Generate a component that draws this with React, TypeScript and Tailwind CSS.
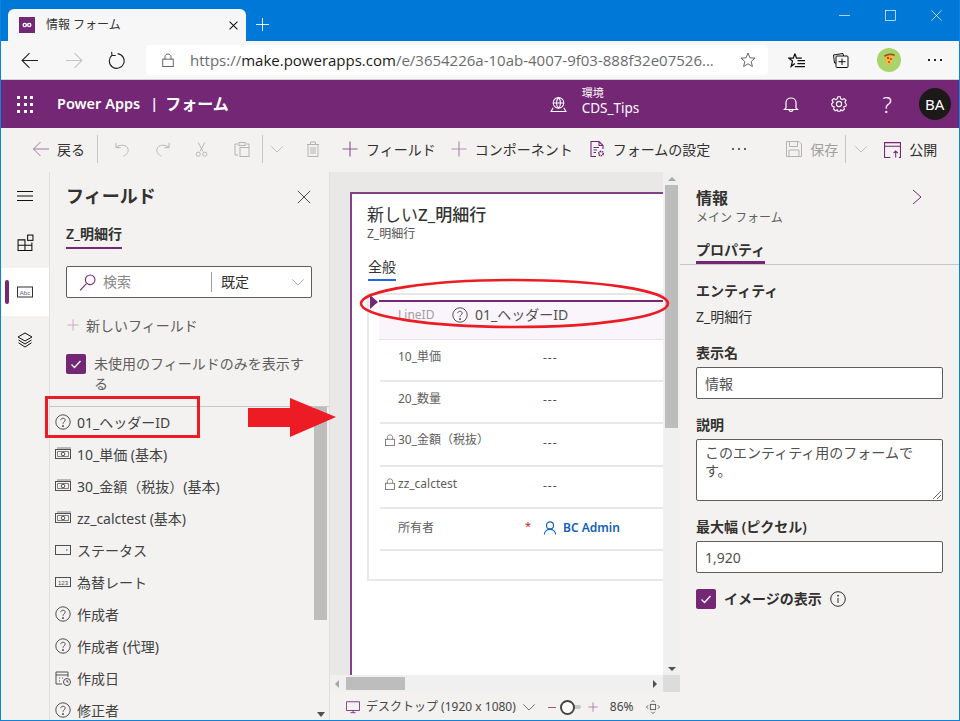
import React from "react";

const P = "#742774";
type IP = { c?: string; s?: number; w?: number; cl?: string; children?: React.ReactNode };
const I = ({ c = "#323130", s = 16, w = 1, cl = "", children }: IP) => (
  <svg width={s} height={s} viewBox="0 0 16 16" fill="none" stroke={c} strokeWidth={w} className={"shrink-0 " + cl}>
    {children}
  </svg>
);
const Plus = ({ c = P, s = 16 }: { c?: string; s?: number }) => (
  <I c={c} s={s} w={1.2}><path d="M8 0.5V15.5M0.5 8H15.5" /></I>
);
const Chevron = ({ c = "#8a8886", s = 16 }: { c?: string; s?: number }) => (
  <I c={c} s={s}><path d="M1.5 5L8 11.5L14.5 5" /></I>
);
const Q = ({ c = "#505050" }: { c?: string }) => (
  <svg width="16" height="16" viewBox="0 0 16 16" fill="none" stroke={c} className="shrink-0">
    <circle cx="8" cy="8" r="7.2" />
    <path d="M5.8 6.2C5.8 3.6 10.2 3.6 10.2 6.2C10.2 7.8 8 7.8 8 9.8" />
    <circle cx="8" cy="12" r="0.6" fill={c} />
  </svg>
);
const Money = () => (
  <I c="#505050"><rect x="0.5" y="3.5" width="15" height="9" /><path d="M2 2H16M2.5 5.5H13.5V10.5H2.5Z" strokeWidth="0.7" /><circle cx="8" cy="8" r="1.8" /></I>
);
const LockI = ({ c = "#605e5c", s = 12 }: { c?: string; s?: number }) => (
  <I c={c} s={s}><rect x="2" y="7" width="12" height="8.5" /><path d="M4.5 7V4.5C4.5 0 11.5 0 11.5 4.5V7" /></I>
);
const Check = () => (
  <div className="w-5 h-5 rounded-[2px] bg-[#742774] flex items-center justify-center shrink-0">
    <svg width="12" height="12" viewBox="0 0 12 12" fill="none" stroke="white" strokeWidth="1.3"><path d="M1.5 6.5L4.5 9.5L10.5 3" /></svg>
  </div>
);

const fields: [React.ReactNode, string][] = [
  [<Q />, "01_ヘッダーID"],
  [<Money />, "10_単価 (基本)"],
  [<Money />, "30_金額（税抜）(基本)"],
  [<Money />, "zz_calctest (基本)"],
  [<I c="#505050"><rect x="0.5" y="3.5" width="15" height="9" /><path d="M11 8H12.5" /></I>, "ステータス"],
  [
    <svg width="16" height="16" viewBox="0 0 16 16" fill="none" stroke="#505050" className="shrink-0">
      <rect x="0.5" y="3.5" width="15" height="9" />
      <text x="8" y="10.5" fontSize="6" fill="#505050" stroke="none" textAnchor="middle" fontFamily="Liberation Sans">123</text>
    </svg>,
    "為替レート",
  ],
  [<Q />, "作成者"],
  [<Q />, "作成者 (代理)"],
  [
    <I c="#505050"><path d="M7 14H1V2H13V7M1 5H13" /><circle cx="12" cy="12" r="3.5" fill="#f3f2f1" /><path d="M12 10V12H13.5" /><path d="M4 8H5M7 8H8M4 11H5" /></I>,
    "作成日",
  ],
  [<Q />, "修正者"],
];

const rows: { t: string; lock: boolean; m: string; v: string; h: string }[] = [
  { t: "10_単価", lock: false, m: "mt-[-6px]", v: "mt-[-4px]", h: "h-[42px]" },
  { t: "20_数量", lock: false, m: "mt-[-6px]", v: "mt-[-4px]", h: "h-[42px]" },
  { t: "30_金額（税抜）", lock: true, m: "mt-[-9px]", v: "mt-[-3px]", h: "h-[43px]" },
  { t: "zz_calctest", lock: true, m: "mt-[-7px]", v: "mt-[-3px]", h: "h-[42px]" },
];

const Label = ({ children, cl = "" }: { children: React.ReactNode; cl?: string }) => (
  <div className={"text-[14px] font-semibold text-[#323130] leading-[18px] " + cl}>{children}</div>
);

const CmdText = ({ children, cl = "", dim = false }: { children: React.ReactNode; cl?: string; dim?: boolean }) => (
  <span className={"text-[14px] whitespace-nowrap " + (dim ? "text-[#a19f9d] " : "text-[#323130] ") + cl}>{children}</span>
);
const Div = ({ cl = "" }: { cl?: string }) => <div className={"w-px h-7 bg-[#c8c6c4] shrink-0 " + cl} />;

export default function App() {
  const dis = "#b5b3b1";
  return (
    <div className="relative w-[960px] h-[721px] overflow-hidden flex flex-col bg-[#f3f2f1] border-x border-b border-[#0a84e0] text-[#323130] font-['Noto_Sans','Noto_Sans_CJK_JP',sans-serif]">
      {/* title bar */}
      <div className="h-[41px] -mx-px bg-[#0078d7] flex items-end shrink-0">
        <div className="ml-[8px] w-[238px] h-[32px] bg-[#f7f7f7] rounded-t-[6px] flex items-center pl-[11px] pr-[8px]">
          <div className="w-4 h-4 bg-[#742774] flex items-center justify-center shrink-0">
            <svg width="10" height="6" viewBox="0 0 10 6" fill="none" stroke="white" strokeWidth="1.4"><circle cx="2.8" cy="3" r="1.6" /><circle cx="7.2" cy="3" r="1.6" /></svg>
          </div>
          <span className="ml-[11px] text-[12px] text-[#333] flex-1">情報 フォーム</span>
          <I c="#111" s={9} w={1.8}><path d="M1 1L15 15M15 1L1 15" /></I>
        </div>
        <div className="ml-[10px] mb-[10px]"><I c="white" s={13} w={1.1}><path d="M8 0V16M0 8H16" /></I></div>
        <div className="flex-1 self-stretch flex items-start justify-end">
          <div className="flex items-center h-[30px] pr-[18px] gap-[35px]">
            <I c="white" s={11}><path d="M0 8H16" /></I>
            <I c="white" s={11}><rect x="0.7" y="0.7" width="14.6" height="14.6" /></I>
            <I c="white" s={11}><path d="M0.5 0.5L15.5 15.5M15.5 0.5L0.5 15.5" /></I>
          </div>
        </div>
      </div>
      {/* address bar */}
      <div className="h-[39px] shrink-0 bg-[#f7f7f7] border-b border-[#d2d2d2] flex items-center">
        <div className="ml-[20px]"><I c="#222" s={17}><path d="M1 8H16M8 1L1 8L8 15" /></I></div>
        <div className="ml-[28px]"><I c="#c4c4c4" s={17}><path d="M0 8H15M8 1L15 8L8 15" /></I></div>
        <div className="ml-[25px]"><I c="#222" s={18}><path d="M8.5 2.3A6.6 6.6 0 1 1 3.5 3.8M3.2 0.8L3.6 4H6.9" /></I></div>
        <div className="ml-[20px] w-[622px] h-[30px] bg-white rounded-[4px] flex items-center pl-[15px]">
          <I c="#505050" s={14}><rect x="2" y="7" width="12" height="8.5" /><path d="M4.5 7V4.5C4.5 0 11.5 0 11.5 4.5V7" /></I>
          <div className="ml-[15px] w-[531px] whitespace-nowrap font-['Open_Sans','Noto_Sans',sans-serif] text-[15px] text-[#6b6b6b]">
            https://<span className="text-[#1a1a1a]">make.powerapps.com</span>/e/3654226a-10ab-4007-9f03-888f32e07526...
          </div>
          <div className="ml-[19px]"><I c="#666" s={16}><path d="M8 1L10 5.8L15 6.2L11.2 9.5L12.4 14.5L8 11.8L3.6 14.5L4.8 9.5L1 6.2L6 5.8Z" /></I></div>
        </div>
        <div className="ml-[20px]">
          <I c="#111" s={17} w={1.2}><path d="M6.5 1.5L8 5.8H13M6.5 1.5L5 5.8H0.8L4.2 8.5L3 13.5L6.5 10.8M9 8.2H16M8.8 11H16M6.5 13.8H16" /></I>
        </div>
        <div className="ml-[28px]">
          <I c="#111" s={16}><path d="M3 11H1.5L0.5 3L10 1.5L10.5 4" /><rect x="3" y="4" width="12" height="11.5" rx="1" /><path d="M9 6.5V13M5.5 9.7H12.5" /></I>
        </div>
        <div className="ml-[28px] w-6 h-6 rounded-full bg-[#a9d46c] flex items-center justify-center shrink-0">
          <svg width="16" height="16" viewBox="0 0 16 16"><path d="M3 4C7 1.5 11 1.5 14 3L7 15Z" fill="#f6b93b" /><path d="M3 3.5C7 1 11 1 14 2.5L13.5 4C11 2.8 7 3 3.5 5Z" fill="#8d5a2b" /><circle cx="7" cy="6" r="1.2" fill="#d93a2b" /><circle cx="10" cy="7" r="1.1" fill="#d93a2b" /><circle cx="8" cy="10" r="1" fill="#d93a2b" /></svg>
        </div>
        <div className="ml-[27px] flex gap-[4px]">
          <i className="w-[2px] h-[2px] bg-[#222] block" /><i className="w-[2px] h-[2px] bg-[#222] block" /><i className="w-[2px] h-[2px] bg-[#222] block" />
        </div>
      </div>
      {/* purple header */}
      <div className="h-[48px] shrink-0 bg-[#742774] flex items-center text-white">
        <div className="ml-[16px] grid grid-cols-3 gap-[4px] w-[16px] shrink-0">
          {Array.from({ length: 9 }).map((_, i) => <i key={i} className="w-[3px] h-[3px] bg-white block" />)}
        </div>
        <span className="ml-[24px] text-[14.5px] font-semibold whitespace-nowrap">Power Apps</span>
        <span className="ml-[10px] text-[14.5px] font-semibold">|</span>
        <span className="ml-[7px] text-[16px] font-bold whitespace-nowrap">フォーム</span>
        <div className="ml-[321px]">
          <I c="white" s={17}><circle cx="8" cy="6.5" r="5" /><path d="M3 6.5H13M8 1.5C5.5 4 5.5 9 8 11.5C10.5 9 10.5 4 8 1.5M3 11L1 14.5H15L13 11" /></I>
        </div>
        <div className="ml-[15px] mb-[6px] flex flex-col w-[202px]">
          <span className="text-[11px] leading-[14px]">環境</span>
          <span className="text-[13.5px] leading-[17px]">CDS_Tips</span>
        </div>
        <div className="ml-[-1px]"><I c="white" s={16} w={1.2}><path d="M3 12V6.5C3 0.5 13 0.5 13 6.5V12L14.5 13.5H1.5ZM6 14C6.5 15.8 9.5 15.8 10 14" /></I></div>
        <div className="ml-[32px]">
          <I c="white" s={16} w={1.1}><circle cx="8" cy="8" r="2.6" /><path d="M6.8 0.8H9.2L9.7 2.8L11.5 3.6L13.3 2.6L15 4.3L13.9 6.1L14.7 7.5L15.5 8.8L14.7 10.2L12.8 10.8L13.4 13L11.7 14.7L9.8 13.7L9.2 15.3H6.8L6.2 13.7L4.3 14.7L2.6 13L3.2 10.8L1.3 10.2L0.5 8L2.2 6.2L1 4.3L2.7 2.6L4.5 3.6L6.3 2.8Z" /></I>
        </div>
        <span className="ml-[33px] w-[15px] text-center text-[22px] font-light leading-none">?</span>
        <div className="ml-[24px] w-8 h-8 rounded-full bg-[#1b1a19] flex items-center justify-center text-[15px]">BA</div>
      </div>
      {/* command bar */}
      <div className="h-[44px] shrink-0 bg-[#f3f2f1] flex items-center pb-[2px]">
        <div className="ml-[32px]"><I c="#a672a6" s={16}><path d="M0.5 8H16M7.5 1L0.5 8L7.5 15" /></I></div>
        <CmdText cl="ml-[8px]">戻る</CmdText>
        <Div cl="ml-[12px]" />
        <div className="ml-[17px]"><I c={dis} s={15}><path d="M1 1V6H6M1 6C4 2.5 13 2 14 8C14.5 11 12 14 9 15" /></I></div>
        <div className="ml-[25px]"><I c={dis} s={15}><path d="M15 1V6H10M15 6C12 2.5 3 2 2 8C1.5 11 4 14 7 15" /></I></div>
        <div className="ml-[24px]"><I c={dis} s={15}><path d="M4.5 0.5L9.5 10M11.5 0.5L6.5 10" /><circle cx="4.5" cy="13" r="2.2" /><circle cx="11.5" cy="13" r="2.2" /></I></div>
        <div className="ml-[25px]"><I c={dis} s={16}><path d="M4 14H1V3H4M12 3H15V6" /><rect x="5" y="1.5" width="6" height="3" /><rect x="6" y="6.5" width="9" height="9" /></I></div>
        <Div cl="ml-[12px]" />
        <div className="ml-[7px]"><Chevron c={dis} s={14} /></div>
        <div className="ml-[21px]"><I c={dis} s={16}><path d="M2 3.5H14M5.5 3.5V1H10.5V3.5M3 3.5V15.5H13V3.5M6 6V13M8 6V13M10 6V13" /></I></div>
        <div className="ml-[21px]"><Plus c="#8f5c8f" /></div>
        <CmdText cl="ml-[8px]">フィールド</CmdText>
        <div className="ml-[15px]"><Plus c="#b08db0" /></div>
        <CmdText cl="ml-[8px]">コンポーネント</CmdText>
        <div className="ml-[16px]"><I c={P} s={16} w={1.1}><path d="M7 15.5H2V0.5H10L14 4.5V8M10 0.5V4.5H14M4.5 6.5H10M4.5 9H8M4.5 11.5H7" /><circle cx="12" cy="12.5" r="2.2" strokeDasharray="1.4 0.6" strokeWidth="1.6" /></I></div>
        <CmdText cl="ml-[8px]">フォームの設定</CmdText>
        <div className="ml-[22px] flex gap-[4px] w-[17px]">
          <i className="w-[2px] h-[2px] bg-[#605e5c] block" /><i className="w-[2px] h-[2px] bg-[#605e5c] block" /><i className="w-[2px] h-[2px] bg-[#605e5c] block" />
        </div>
        <div className="ml-[37px]"><I c={dis} s={16}><path d="M0.5 0.5H13L15.5 3V15.5H0.5ZM3.5 0.5V5.5H11.5V0.5M3 15.5V9H13V15.5" /></I></div>
        <CmdText dim cl="ml-[8px]">保存</CmdText>
        <Div cl="ml-[7px]" />
        <div className="ml-[8px]"><Chevron c={dis} s={14} /></div>
        <div className="ml-[16px]"><I c={P} s={17}><path d="M6 15.5H0.5V1.5H15.5V15.5H14M0.5 5H15.5M11 15.5V9.5M9 11.5L11 9.5L13 11.5" /></I></div>
        <CmdText cl="ml-[8px]">公開</CmdText>
      </div>
      {/* main */}
      <div className="flex-1 min-h-0 flex">
        {/* rail */}
        <div className="w-[49px] shrink-0 flex flex-col border-r border-[#e1dfdd] pt-[12px]">
          <div className="h-[24px] flex items-center justify-center"><I c="#111" s={16}><path d="M0 3.5H16M0 8H16M0 12.5H16" /></I></div>
          <div className="h-[48px] mt-[12px] flex items-center justify-center pb-[4px]">
            <I c="#111" s={17}><path d="M1 5.5H7.5V15.5H1ZM7.5 10.5H14V15.5H7.5M1 10.5H7.5M7.5 5.5V10.5H14V8" /><rect x="10" y="1" width="5" height="5" /></I>
          </div>
          <div className="h-[48px] bg-white flex items-center relative">
            <div className="absolute left-[4px] top-[12px] w-1 h-6 rounded-full bg-[#742774]" />
            <svg width="16" height="14" viewBox="0 0 16 14" className="ml-[16px]" fill="none"><rect x="0.5" y="2" width="15" height="10" stroke="#323130" strokeWidth="1" /><text x="8" y="9.7" fontSize="6" textAnchor="middle" fill="#5a5a9a" fontFamily="Liberation Sans">Abc</text></svg>
          </div>
          <div className="h-[48px] flex items-center justify-center">
            <I c="#111" s={16}><path d="M8 1L15 5L8 9L1 5ZM1.5 8L8 12L14.5 8M1.5 10.8L8 15L14.5 10.8" /></I>
          </div>
        </div>
        {/* fields panel */}
        <div className="w-[280px] shrink-0 border-r border-[#e1dfdd] flex flex-col">
          <div className="h-[48px] shrink-0 flex items-center justify-between pl-[16px] pr-[18px] pt-[1px]">
            <span className="text-[18px] font-bold">フィールド</span>
            <I c="#323130" s={14}><path d="M1 1L15 15M15 1L1 15" /></I>
          </div>
          <div className="ml-[16px] w-fit text-[14px] font-semibold mt-[5px] h-[24px] border-b-2 border-[#742774] leading-[18px]">Z_明細行</div>
          <div className="ml-[16px] mt-[17px] w-[246px] h-[32px] bg-white border border-[#605e5c] rounded-[2px] flex items-center">
            <div className="ml-[12px]"><I c={P} s={17}><circle cx="10.5" cy="5.5" r="4.5" /><path d="M7 9L1 15.5" /></I></div>
            <span className="ml-[7px] w-[100px] text-[14px] text-[#8a8886] leading-[18px] mb-[1px]">検索</span>
            <div className="ml-[8px] w-px h-5 bg-[#a19f9d]" />
            <span className="ml-[9px] flex-1 text-[14px] leading-[18px] mb-[1px]">既定</span>
            <div className="mr-[6px]"><Chevron s={14} c="#a19f9d" /></div>
          </div>
          <div className="ml-[16px] mt-[18px] h-[20px] flex items-center pb-[2px]">
            <div className="ml-[1px]"><Plus c="#c3a7c3" s={12} /></div>
            <span className="ml-[7px] text-[14px] text-[#605e5c]">新しいフィールド</span>
          </div>
          <div className="ml-[16px] mt-[18px] flex w-[240px]">
            <Check />
            <span className="ml-[8px] w-[215px] text-[14px] leading-[20px] text-[#605e5c]">未使用のフィールドのみを表示する</span>
          </div>
          <div className="mt-[12px] border-t border-[#c8c6c4] flex-1 min-h-0 flex overflow-hidden">
            <div className="flex-1 min-w-0 -mt-[1px]">
              {fields.map(([ic, t], i) => (
                <div key={i} className="h-[32px] pl-[5px] flex items-center gap-[6px] text-[14px] text-[#424242] whitespace-nowrap">
                  {ic}
                  <span>{t}</span>
                </div>
              ))}
            </div>
            <div className="w-[15px] shrink-0 flex flex-col">
              <div className="w-[13px] h-[213px] bg-[#bdbdbd]" />
              <div className="mt-auto mb-[3px] ml-[3px] w-0 h-0 border-x-[4px] border-x-transparent border-t-[5px] border-t-[#505050]" />
            </div>
          </div>
        </div>
        {/* canvas */}
        <div className="w-[350px] shrink-0 flex flex-col">
          <div className="flex-1 min-h-0 flex bg-[#e9e8e7]">
            <div className="flex-1 min-w-0 pt-[20px] pl-[20px] flex">
              <div className="flex-1 bg-white border-l-2 border-t-2 border-[#85408a] pl-[15px] pt-[9px]">
                <div className="text-[17px] leading-[23px] text-[#333]">新しい<span className="font-medium">Z_明細行</span></div>
                <div className="text-[12px] leading-[16px] text-[#505050]">Z_明細行</div>
                <div className="mt-[15px] ml-[1px] w-fit text-[14px] leading-[19px] pb-[3px] border-b-2 border-[#2266e3] text-[#333]">全般</div>
                <div className="mt-[12px] h-[288px] border-l-2 border-t-2 border-b-2 border-[#e8e8e8] pl-[11px] pt-[5px]">
                  <div className="relative h-[40px] -ml-[1px] bg-[#faf5fb] border-t-2 border-[#742774] border-b border-b-[#e8e0e8] flex items-center pl-[19px] text-[12px] pb-[12px]">
                    <div className="absolute left-[-9px] top-[-7px] w-0 h-0 border-y-[7px] border-y-transparent border-l-[8px] border-l-[#742774]" />
                    <span className="text-[#a19f9d] w-[54px]">LineID</span>
                    <Q />
                    <span className="ml-[7px] text-[14px] text-[#505050]">01_ヘッダーID</span>
                  </div>
                  {rows.map(({ t, lock, m, v, h }) => (
                    <div key={t} className={"flex items-center border-b-2 border-[#e8e8e8] text-[12px] text-[#605e5c] " + h}>
                      <div className={"w-[18px] flex justify-center pl-[1px] " + m}>{lock && <LockI />}</div>
                      <span className={"w-[145px] whitespace-nowrap " + m}>{t}</span>
                      <span className={"text-[#505050] tracking-[1px] " + v}>---</span>
                    </div>
                  ))}
                  <div className="h-[42px] flex items-center border-b-2 border-[#e8e8e8] text-[12px] text-[#605e5c]">
                    <span className="ml-[18px] w-[127px] mt-[-2px]">所有者</span>
                    <span className="w-[18px] text-[#e81123] text-[11px] mt-[-6px]">*</span>
                    <div className="mt-[-2px]"><I c="#1160b7" s={14} w={1.3}><circle cx="8" cy="5" r="4" /><path d="M1.5 15.5C2 7.5 14 7.5 14.5 15.5" /></I></div>
                    <span className="ml-[6px] mt-[-2px] text-[#1160b7] font-semibold text-[12px]">BC Admin</span>
                  </div>
                </div>
              </div>
            </div>
            <div className="w-[17px] shrink-0 bg-[#f0f0f0] flex flex-col items-center pt-[5px] pb-[4px]">
              <div className="w-0 h-0 border-x-[4px] border-x-transparent border-b-[4px] border-b-[#a6a6a6]" />
              <div className="w-[13px] mt-[4px] h-[243px] bg-[#bdbdbd]" />
              <div className="mt-auto w-0 h-0 border-x-[4px] border-x-transparent border-t-[4px] border-t-[#505050]" />
            </div>
          </div>
          <div className="h-[17px] shrink-0 flex">
            <div className="w-[333px] bg-[#f0f0f0] flex items-center pl-[5px]">
              <div className="w-0 h-0 border-y-[4px] border-y-transparent border-r-[4px] border-r-[#a6a6a6]" />
              <div className="ml-[7px] w-[59px] h-[13px] bg-[#bdbdbd]" />
              <div className="ml-auto mr-[6px] w-0 h-0 border-y-[4px] border-y-transparent border-l-[4px] border-l-[#505050]" />
            </div>
            <div className="flex-1 bg-[#dcdcdc]" />
          </div>
          <div className="h-[28px] shrink-0 flex items-center text-[12px] text-[#484644] bg-[#f3f2f1] pt-[2px]">
            <div className="ml-[16px]"><I c={P} s={14}><path d="M0.5 2H15.5V12H0.5ZM5 14.5H11M8 12V14.5" /></I></div>
            <span className="ml-[6px] whitespace-nowrap">デスクトップ (1920 x 1080)</span>
            <div className="ml-[6px]"><Chevron c="#605e5c" s={14} /></div>
            <div className="ml-[12px] w-[8px] h-px bg-[#8f5c8f]" />
            <div className="ml-[4px] w-[15px] h-[15px] rounded-full border-2 border-[#484644] bg-white relative z-10" />
            <div className="-ml-[1px] w-[7px] h-[4px] bg-[#c8c6c4] rounded-r-full" />
            <div className="ml-[7px]"><Plus c="#a6679f" s={10} /></div>
            <span className="ml-[12px] text-[12px]">86%</span>
            <div className="ml-[12px]"><I c="#505050" s={14}><rect x="5" y="5" width="6" height="6" /><path d="M8 0.5L6 2.5M8 0.5L10 2.5M8 15.5L6 13.5M8 15.5L10 13.5M0.5 8L2.5 6M0.5 8L2.5 10M15.5 8L13.5 6M15.5 8L13.5 10" /></I></div>
          </div>
        </div>
        {/* right panel */}
        <div className="flex-1 min-w-0 flex flex-col">
          <div className="h-[93px] shrink-0 border-b border-[#c8c6c4] pl-[16px] pt-[15px] relative">
            <div className="text-[16px] font-bold leading-[22px] text-[#323130]">情報</div>
            <div className="text-[12px] leading-[17px] text-[#605e5c]">メイン フォーム</div>
            <div className="absolute right-[34px] top-[17px]"><I c={P} s={16}><path d="M4 1L12 8L4 15" /></I></div>
            <div className="mt-[14px] w-fit h-[24px] text-[14px] leading-[20px] font-semibold border-b-[3px] border-[#742774]">プロパティ</div>
          </div>
          <div className="pl-[16px] pr-[16px] pt-[17px]">
            <Label>エンティティ</Label>
            <div className="mt-[7px] text-[14px] leading-[19px]">Z_明細行</div>
            <Label cl="mt-[18px]">表示名</Label>
            <div className="mt-[5px] w-[247px] h-[32px] bg-white border border-[#605e5c] rounded-[2px] px-[8px] flex items-center text-[14px] text-[#505050]">情報</div>
            <Label cl="mt-[17px]">説明</Label>
            <div className="mt-[5px] w-[247px] h-[62px] bg-white border border-[#605e5c] rounded-[2px] pl-[8px] pr-[24px] pt-[4px] text-[14px] leading-[18px] text-[#505050] relative">
              このエンティティ用のフォームです。
              <svg width="9" height="9" viewBox="0 0 9 9" className="absolute right-[1px] bottom-[1px]" stroke="#666"><path d="M1 9L9 1M5 9L9 5" /></svg>
            </div>
            <Label cl="mt-[17px] text-[13.5px]">最大幅 (ピクセル)</Label>
            <div className="mt-[5px] w-[247px] h-[32px] bg-white border border-[#605e5c] rounded-[2px] px-[8px] flex items-center text-[14px] text-[#505050]">1,920</div>
            <div className="mt-[16px] flex items-center">
              <Check />
              <Label cl="ml-[8px]">イメージの表示</Label>
              <div className="ml-[8px]">
                <svg width="16" height="16" viewBox="0 0 16 16" fill="none" stroke="#323130"><circle cx="8" cy="8" r="7.3" /><path d="M8 7V12" /><circle cx="8" cy="4.7" r="0.5" fill="#323130" /></svg>
              </div>
            </div>
          </div>
        </div>
      </div>
      {/* annotations */}
      <div className="absolute left-[44px] top-[396px] w-[155px] h-[42px] border-[3px] border-[#ed1c24] pointer-events-none" />
      <svg width="960" height="721" viewBox="0 0 960 721" className="absolute left-[-1px] top-0 pointer-events-none" fill="none">
        <path d="M248 408H290V398L336 417L290 437V427H248Z" fill="#ed1c24" />
        <ellipse cx="514.5" cy="303.5" rx="153.5" ry="23.5" stroke="#ed1c24" strokeWidth="2.6" />
      </svg>
    </div>
  );
}
